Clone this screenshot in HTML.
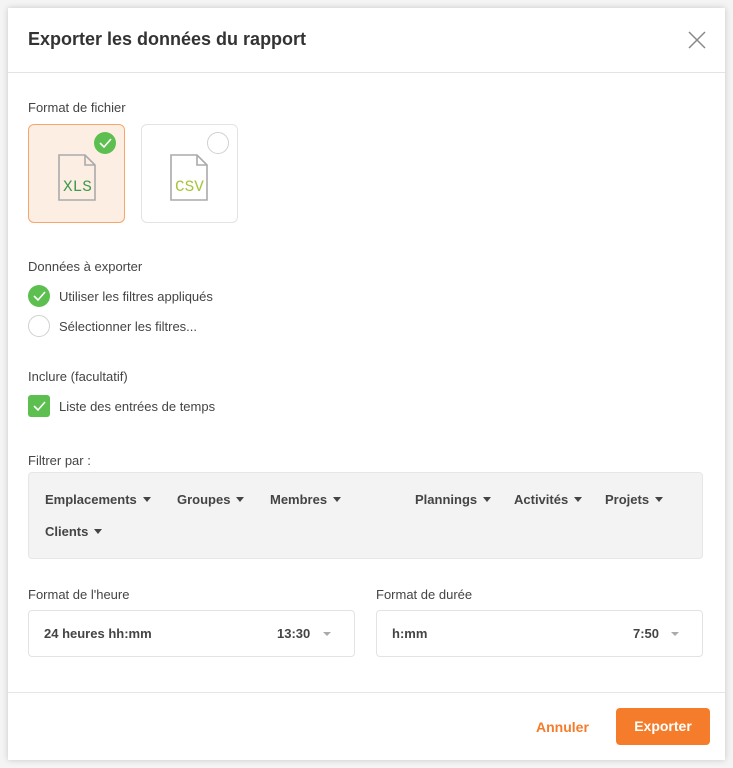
<!DOCTYPE html>
<html><head><meta charset="utf-8"><style>
*{box-sizing:border-box;margin:0;padding:0}
body{width:733px;height:768px;background:#f4f4f4;font-family:"Liberation Sans",sans-serif;position:relative;overflow:hidden;color:#333}
.m{position:absolute;left:8px;top:8px;width:717px;height:752px;background:#fff;box-shadow:0 0 6px rgba(0,0,0,.18)}
.a{position:absolute}
.t{font-size:13px;color:#444}
.hd{left:0;top:0;width:717px;height:65px;border-bottom:1px solid #e4e4e4}
.card{width:97px;height:99px;border-radius:6px;border:1px solid #e3e3e3;background:#fff}
.sel{background:#fdeee3;border-color:#f5a66b}
.chk{width:22px;height:22px;border-radius:50%;background:#5cbf50}
.emp{width:22px;height:22px;border-radius:50%;border:1px solid #d0d0d0;background:#fff}
.filters{left:20px;top:464px;width:675px;height:87px;background:#f3f3f3;border:1px solid #e6e6e6;border-radius:4px}
.f,.v{position:absolute;font-size:13px;font-weight:bold;color:#444}
.f:after{content:"";display:inline-block;margin-left:6px;border:4.5px solid transparent;border-top:5px solid #444;border-bottom:0;vertical-align:2px}
.sel2{height:47px;border:1px solid #e3e3e3;border-radius:4px;background:#fff}
.car{position:absolute;top:21px;border:4px solid transparent;border-top:4px solid #aaa;border-bottom:0}
</style></head><body>
<div class="m">
<div class="a hd"></div>
<div class="a" style="left:20px;top:21px;font-size:18px;font-weight:bold;color:#333">Exporter les données du rapport</div>
<svg class="a" style="left:680px;top:23px" width="18" height="18" viewBox="0 0 18 18"><path d="M1 1L17 17M17 1L1 17" stroke="#888" stroke-width="1.5"/></svg>

<div class="a t" style="left:20px;top:92px">Format de fichier</div>
<div class="a card sel" style="left:20px;top:116px"></div>
<div class="a chk" style="left:86px;top:124px"><svg width="22" height="22"><path d="M6 11l4 4 7-8" stroke="#fff" stroke-width="1.6" fill="none"/></svg></div>
<svg class="a" style="left:50px;top:146px" width="40" height="48" viewBox="0 0 40 48"><path d="M1 1H27L37 11V46H1Z M27 1V11H37" stroke="#aaa" stroke-width="1.6" fill="none"/><text x="5" y="37" font-family="Liberation Mono" font-size="16" fill="#3d9a4c">XLS</text></svg>
<div class="a card" style="left:133px;top:116px"></div>
<div class="a emp" style="left:199px;top:124px"></div>
<svg class="a" style="left:162px;top:146px" width="40" height="48" viewBox="0 0 40 48"><path d="M1 1H27L37 11V46H1Z M27 1V11H37" stroke="#aaa" stroke-width="1.6" fill="none"/><text x="5" y="37" font-family="Liberation Mono" font-size="16" fill="#a6c43c">CSV</text></svg>

<div class="a t" style="left:20px;top:251px">Données à exporter</div>
<div class="a chk" style="left:20px;top:277px"><svg width="22" height="22"><path d="M6 11l4 4 7-8" stroke="#fff" stroke-width="1.6" fill="none"/></svg></div>
<div class="a t" style="left:51px;top:281px">Utiliser les filtres appliqués</div>
<div class="a emp" style="left:20px;top:307px"></div>
<div class="a t" style="left:51px;top:311px">Sélectionner les filtres...</div>

<div class="a t" style="left:20px;top:361px">Inclure (facultatif)</div>
<div class="a" style="left:20px;top:387px;width:22px;height:22px;border-radius:3px;background:#5cbf50"><svg width="22" height="22"><path d="M6 11l4 4 7-8" stroke="#fff" stroke-width="1.6" fill="none"/></svg></div>
<div class="a t" style="left:51px;top:391px">Liste des entrées de temps</div>

<div class="a t" style="left:20px;top:445px">Filtrer par :</div>
<div class="a filters">
<span class="f" style="left:16px;top:19px">Emplacements</span>
<span class="f" style="left:148px;top:19px">Groupes</span>
<span class="f" style="left:241px;top:19px">Membres</span>
<span class="f" style="left:386px;top:19px">Plannings</span>
<span class="f" style="left:485px;top:19px">Activités</span>
<span class="f" style="left:576px;top:19px">Projets</span>
<span class="f" style="left:16px;top:51px">Clients</span>
</div>

<div class="a t" style="left:20px;top:579px">Format de l'heure</div>
<div class="a sel2" style="left:20px;top:602px;width:327px"><span class="v" style="left:15px;top:15px">24 heures hh:mm</span><span class="v" style="left:248px;top:15px">13:30</span><span class="car" style="left:294px"></span></div>
<div class="a t" style="left:368px;top:579px">Format de durée</div>
<div class="a sel2" style="left:368px;top:602px;width:327px"><span class="v" style="left:15px;top:15px">h:mm</span><span class="v" style="left:256px;top:15px">7:50</span><span class="car" style="left:294px"></span></div>

<div class="a" style="left:0;top:684px;width:717px;border-top:1px solid #e6e6e6"></div>
<div class="a" style="left:528px;top:711px;font-size:14px;font-weight:bold;color:#f47c2a">Annuler</div>
<div class="a" style="left:608px;top:700px;width:94px;height:37px;border-radius:4px;background:#f47c2a;color:#fff;font-size:14px;font-weight:bold;text-align:center;line-height:37px">Exporter</div>
</div>
</body></html>
